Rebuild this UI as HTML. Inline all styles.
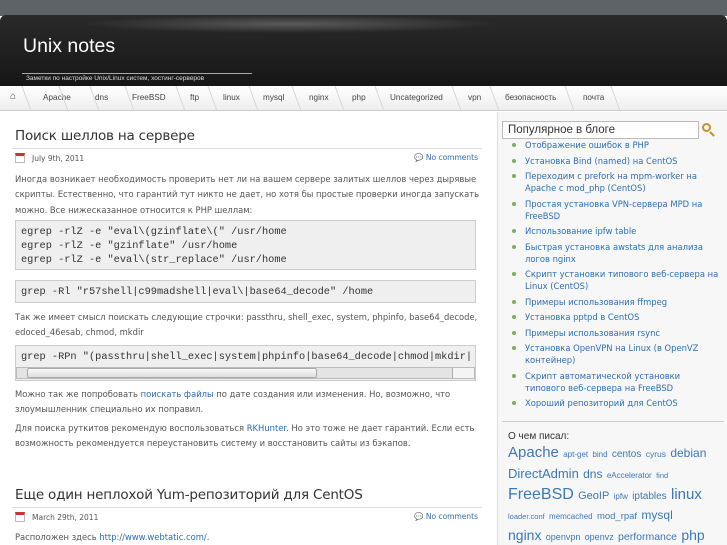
<!DOCTYPE html>
<html><head><meta charset="utf-8"><style>
*{margin:0;padding:0;box-sizing:border-box}
body{width:727px;height:545px;overflow:hidden;background:#fff;font-family:"DejaVu Sans","Liberation Sans",sans-serif;font-size:8.4px;color:#555;position:relative}
a{color:#2e6eb0;text-decoration:none}
#top{position:absolute;left:0;top:0;width:727px;height:16px;background:#5d6367}
#hdr{position:absolute;left:0;top:15px;width:727px;height:71px;background:linear-gradient(#2a2a2a,#161616);border-radius:6px 6px 0 0}
#hdr .hl{position:absolute;left:80px;top:0;width:420px;height:18px;background:radial-gradient(ellipse at center,#5a5a5a,transparent 70%)}
#hdr h1{position:absolute;left:23px;top:20px;color:#fff;font-family:"Liberation Sans",sans-serif;font-weight:normal;font-size:19.5px}
#hdr .ln{position:absolute;left:22px;top:58px;width:230px;height:1px;background:#aaa}
#hdr .d{position:absolute;left:26px;top:60px;color:#ddd;font-size:6.5px;font-family:"Liberation Sans",sans-serif}
#nav{position:absolute;left:0;top:86px;width:727px;height:25px;background:linear-gradient(#fff,#eee);border-bottom:1px solid #ccc;font-family:"Liberation Sans",sans-serif;font-size:8.2px;color:#444}
#nav span{position:absolute;top:7px}
#nav i{position:absolute;top:0;width:8px;height:25px;border-right:1px solid #d5d5d5;transform:skewX(20deg)}
#side{position:absolute;left:497px;top:112px;width:230px;height:433px;background:#f7f7f7;border-left:1px solid #ddd;overflow:hidden}
#srch{position:absolute;left:502px;top:121px;width:197px;height:18px;background:#fff;border:1px solid #bbb;font-family:"Liberation Sans",sans-serif;font-size:11.5px;color:#333;padding:2px 0 0 5px}
#side ul{position:absolute;left:0;top:27px;list-style:none;width:230px}
#side li{position:relative;padding-left:27px;line-height:12px;margin-bottom:3.5px;font-size:8.4px;color:#2e6eb0;padding-right:6px}
#side li:before{content:"";position:absolute;left:14px;top:4px;width:4px;height:4px;border-radius:50%;background:#7bae5b}
.h2{position:absolute;left:15px;font-size:13.5px;color:#333;font-family:"DejaVu Sans",sans-serif;letter-spacing:-0.2px}
.hr{position:absolute;left:12px;width:470px;height:1px;background:#ddd}
.meta{position:absolute;left:15px;width:463px;font-size:7.5px;color:#555}
.cal{display:inline-block;width:10px;height:10px;border:1px solid #bbb;border-top:3px solid #c33;vertical-align:-2px;margin-right:7px;background:#fff}
.p{position:absolute;left:15px;width:465px;line-height:15.3px}
.code{position:absolute;left:15px;width:461px;background:#efefef;border:1px solid #ccc;font-family:"Liberation Mono","DejaVu Sans Mono",monospace;font-size:10.3px;color:#333;padding:4px 5px;line-height:14px;white-space:pre;overflow:hidden}
.tag a{color:#3d78b5;margin-right:2px}
</style></head><body>
<div id="top"></div>
<div id="hdr"><div class="hl"></div><h1>Unix notes</h1><div class="ln"></div><div class="d">Заметки по настройке Unix/Linux систем, хостинг-серверов</div></div>
<div id="nav">
<span style="left:10px;font-size:10px;top:5px">⌂</span><i style="left:19px"></i>
<span style="left:43px">Apache</span><i style="left:56px"></i>
<span style="left:95px">dns</span><i style="left:87px"></i>
<span style="left:132px">FreeBSD</span><i style="left:122px"></i>
<span style="left:190px">ftp</span><i style="left:173px"></i>
<span style="left:223px">linux</span><i style="left:205px"></i>
<span style="left:263px">mysql</span><i style="left:246px"></i>
<span style="left:309px">nginx</span><i style="left:289px"></i>
<span style="left:352px">php</span><i style="left:332px"></i>
<span style="left:390px">Uncategorized</span><i style="left:372px"></i>
<span style="left:468px">vpn</span><i style="left:449px"></i>
<span style="left:505px">безопасность</span><i style="left:487px"></i>
<span style="left:583px">почта</span><i style="left:562px"></i><i style="left:608px"></i>
</div>

<div class="h2" style="top:128px">Поиск шеллов на сервере</div>
<div class="hr" style="top:148px"></div>
<div class="meta" style="top:153px"><span class="cal"></span>July 9th, 2011<a style="float:right" href="#">💬 No comments</a></div>
<div class="p" style="top:172px">Иногда возникает необходимость проверить нет ли на вашем сервере залитых шеллов через дырявые скрипты. Естественно, что гарантий тут никто не дает, но хотя бы простые проверки иногда запускать можно. Все нижесказанное относится к PHP шеллам:</div>
<div class="code" style="top:220px;height:50px">egrep -rlZ -e "eval\(gzinflate\(" /usr/home
egrep -rlZ -e "gzinflate" /usr/home
egrep -rlZ -e "eval\(str_replace" /usr/home</div>
<div class="code" style="top:280px;height:23px">grep -Rl "r57shell|c99madshell|eval\|base64_decode" /home</div>
<div class="p" style="top:310px">Так же имеет смысл поискать следующие строчки: passthru, shell_exec, system, phpinfo, base64_decode, edoced_46esab, chmod, mkdir</div>
<div class="code" style="top:345px;height:36px">grep -RPn "(passthru|shell_exec|system|phpinfo|base64_decode|chmod|mkdir|</div>
<div style="position:absolute;left:16px;top:367px;width:459px;height:12px;background:#e4e4e4;border:1px solid #bbb"><div style="position:absolute;left:10px;top:0;width:290px;height:10px;background:linear-gradient(#fafafa,#ddd);border:1px solid #aaa;border-radius:2px"></div><div style="position:absolute;right:0;top:0;width:22px;height:10px;background:#f4f4f4;border-left:1px solid #aaa"></div></div>
<div class="p" style="top:387px">Можно так же попробовать <a href="#">поискать файлы</a> по дате создания или изменения. Но, возможно, что злоумышленник специально их поправил.</div>
<div class="p" style="top:421px">Для поиска руткитов рекомендую воспользоваться <a href="#">RKHunter</a>. Но это тоже не дает гарантий. Если есть возможность рекомендуется переустановить систему и восстановить сайты из бэкапов.</div>
<div class="h2" style="top:487px">Еще один неплохой Yum-репозиторий для CentOS</div>
<div class="hr" style="top:507px"></div>
<div class="meta" style="top:512px"><span class="cal"></span>March 29th, 2011<a style="float:right" href="#">💬 No comments</a></div>
<div class="p" style="top:530px">Расположен здесь <a href="#">http://www.webtatic.com/</a>.</div>

<div id="side">
<ul>
<li>Отображение ошибок в PHP</li>
<li>Установка Bind (named) на CentOS</li>
<li>Переходим с prefork на mpm-worker на Apache с mod_php (CentOS)</li>
<li>Простая установка VPN-сервера MPD на FreeBSD</li>
<li>Использование ipfw table</li>
<li>Быстрая установка awstats для анализа логов nginx</li>
<li>Скрипт установки типового веб-сервера на Linux (CentOS)</li>
<li>Примеры использования ffmpeg</li>
<li>Установка pptpd в CentOS</li>
<li>Примеры использования rsync</li>
<li>Установка OpenVPN на Linux (в OpenVZ контейнер)</li>
<li>Скрипт автоматической установки типового веб-сервера на FreeBSD</li>
<li>Хороший репозиторий для CentOS</li>
</ul>
<div style="position:absolute;left:4px;top:309px;width:222px;height:1px;background:#ccc"></div>
<div style="position:absolute;left:10px;top:319px;font-size:10px;color:#333;font-family:'Liberation Sans',sans-serif">О чем писал:</div>
<div class="tag" style="position:absolute;left:10px;top:331px;width:215px;line-height:19px;font-family:'Liberation Sans',sans-serif">
<a style="font-size:15px">Apache</a> <a style="font-size:8px">apt-get</a> <a style="font-size:8px">bind</a> <a style="font-size:10px">centos</a> <a style="font-size:8.5px">cyrus</a> <a style="font-size:12px">debian</a><br>
<a style="font-size:13px">DirectAdmin</a> <a style="font-size:12px">dns</a> <a style="font-size:8px">eAccelerator</a> <a style="font-size:7.5px">find</a><br>
<a style="font-size:16px">FreeBSD</a> <a style="font-size:11px">GeoIP</a> <a style="font-size:8px">ipfw</a> <a style="font-size:10px">iptables</a> <a style="font-size:15px">linux</a><br>
<a style="font-size:7.5px">loader.conf</a> <a style="font-size:8px">memcached</a> <a style="font-size:9.5px">mod_rpaf</a> <a style="font-size:12px">mysql</a><br>
<a style="font-size:14px">nginx</a> <a style="font-size:9px">openvpn</a> <a style="font-size:9px">openvz</a> <a style="font-size:10.5px">performance</a> <a style="font-size:14px">php</a><br>
<a style="font-size:9px">postfix proxy raid rpm sendmail</a>
</div>
</div>
<div id="srch">Популярное в блоге</div>
<div style="position:absolute;left:702px;top:123px;width:9px;height:9px;border:2px solid #c8902e;border-radius:50%"></div>
<div style="position:absolute;left:709px;top:133px;width:6px;height:2px;background:#c8902e;transform:rotate(45deg)"></div>
</body></html>
